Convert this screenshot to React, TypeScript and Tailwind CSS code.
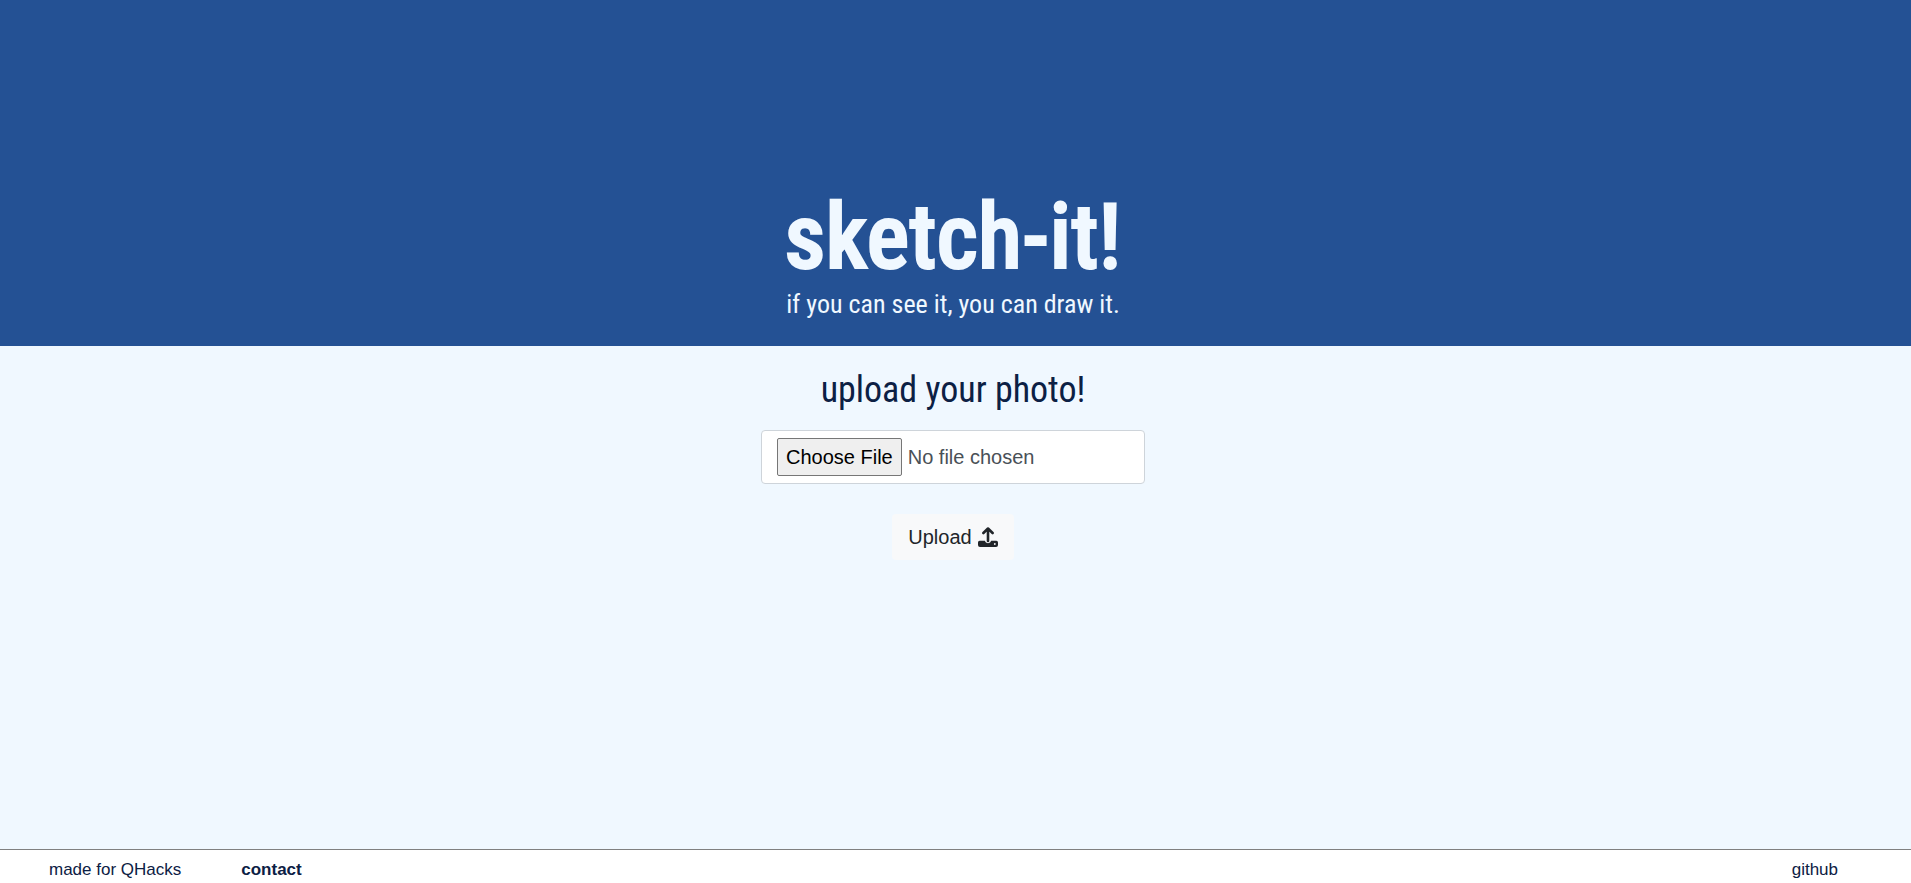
function UploadIcon() {
    return (
        <svg viewBox="0 0 20 20" className="size-5" aria-hidden="true">
            <path d="M1.6 13.8H6.8A3.3 3.3 0 0 0 13.2 13.8H18.4A1.9 1.9 0 0 1 20 15.7V18A2 2 0 0 1 18 20H2A2 2 0 0 1 0 18V15.7A1.9 1.9 0 0 1 1.6 13.8Z" fill="currentColor" />
            <path d="M10 14V2M5.4 6 10 1.5 14.6 6" fill="none" stroke="currentColor" strokeWidth="2.6" strokeLinecap="round" strokeLinejoin="round" />
            <circle cx="16.8" cy="17" r="0.9" fill="#f8f9fa" />
        </svg>
    )
}

function Header() {
    return (
        <header className="flex flex-col items-center bg-[#245194] pt-[190px] pr-[5px] pb-6 font-['Roboto_Condensed',Roboto,sans-serif] text-[#f0f8ff]">
            <h1 className="text-[90px] leading-[96px] font-medium [-webkit-text-stroke:2px_#f0f8ff] [stroke-linejoin:round]">sketch-it!</h1>
            <p className="text-[26px] leading-9">if you can see it, you can draw it.</p>
        </header>
    )
}

function UploadForm() {
    return (
        <form className="flex flex-col items-center" onSubmit={(e) => e.preventDefault()}>
            <label htmlFor="photo" className="mb-4 font-['Roboto_Condensed',Roboto,sans-serif] text-[36px] leading-[48px]">
                upload your photo!
            </label>
            <input
                id="photo"
                type="file"
                className="w-96 rounded border border-[#ced4da] bg-white px-[15px] py-[7px] text-xl text-[#495057] file:mr-1.5 file:rounded-xs file:border file:border-solid file:border-[#767676] file:bg-[#efefef] file:px-2 file:py-1 file:text-black"
            />
            <button type="submit" className="mt-[30px] flex items-center gap-1.5 rounded bg-[#f8f9fa] px-4 py-[9px] text-xl text-[#212529]">
                Upload
                <UploadIcon />
            </button>
        </form>
    )
}

function Footer() {
    return (
        <footer className="flex justify-between border-t border-[#808080] bg-white pt-2 pr-[73px] pb-px pl-[49px] text-[17px] leading-6">
            <div className="flex gap-[60px]">
                <span>made for QHacks</span>
                <a href="#contact" className="font-bold">contact</a>
            </div>
            <a href="#github">github</a>
        </footer>
    )
}

export default function App() {
    return (
        <div className="flex min-h-screen flex-col bg-[#f0f8ff] font-['Liberation_Sans',Arial,sans-serif] text-[#0c2044]">
            <Header />
            <main className="grow pt-5 pr-[5px]">
                <UploadForm />
            </main>
            <Footer />
        </div>
    )
}
